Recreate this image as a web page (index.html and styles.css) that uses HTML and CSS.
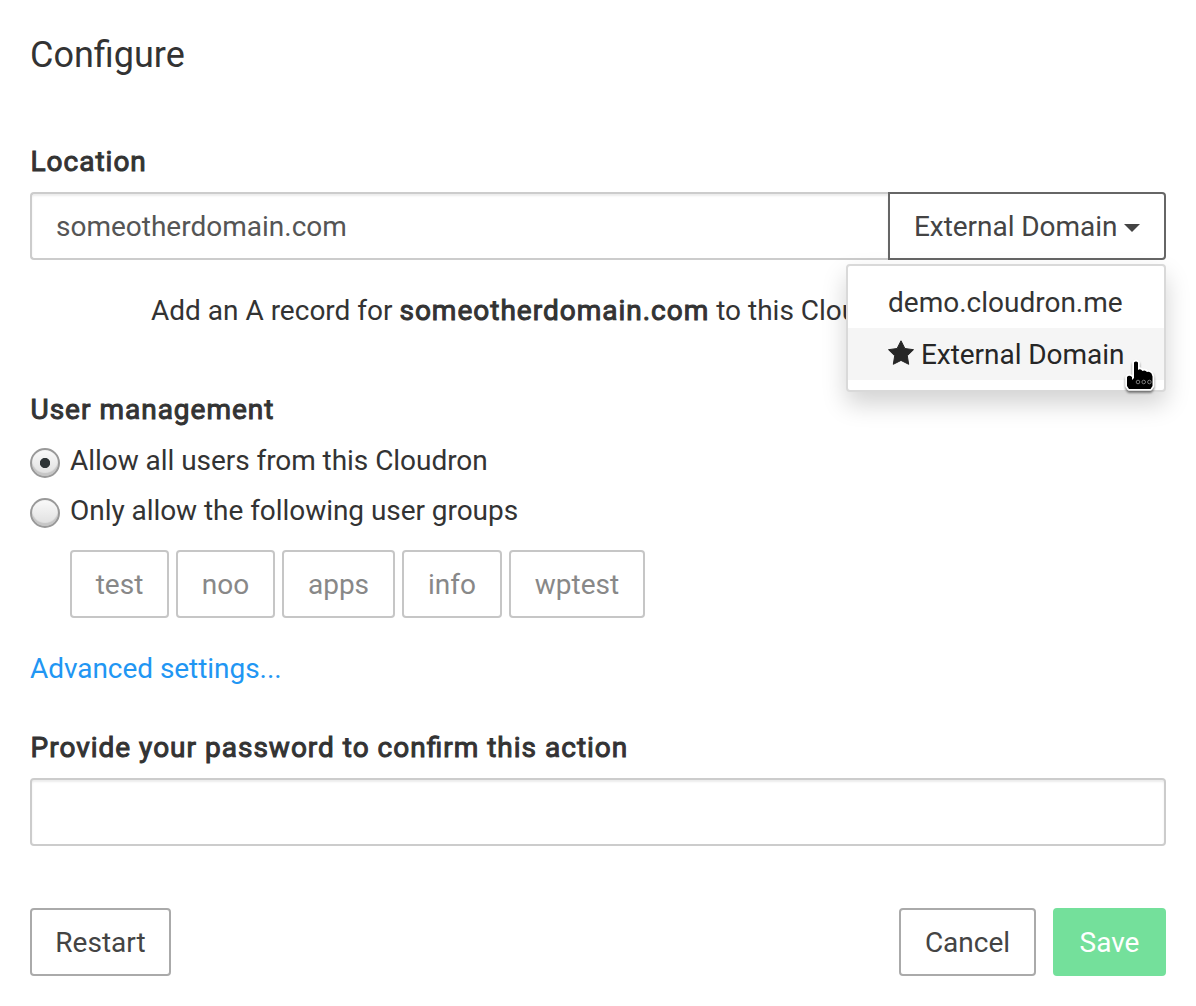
FILE: index.html
```
<!DOCTYPE html>
<html lang="en">
<head>
<meta charset="utf-8">
<title>Configure</title>
<link rel="stylesheet" href="styles.css">
</head>
<body>
<form class="dialog">
  <h1 class="title">Configure</h1>

  <section class="location">
    <div class="heading">Location</div>
    <div class="input-group">
      <div class="input domain-input">someotherdomain.com</div>
      <div class="domain-select">
        <button type="button" class="btn toggle">External Domain <span class="caret"></span></button>
        <div class="menu">
          <div class="menu-item">demo.cloudron.me</div>
          <div class="menu-item active"><svg class="star" viewBox="0 0 26 25" width="26" height="25"><path d="M13 .8L16.900 8.500 25.500 9.700 19.300 15.800 20.700 24.300 13 20.400 5.300 24.300 6.700 15.800 .5 9.700 9.100 8.500z"/></svg><span>External Domain</span></div>
          <svg class="pointer" viewBox="0 0 34 37" width="34" height="37"><path d="M10 4.500q2-2 4 0V12q2.500-2 4.500 1 2.500-1.500 4.500 1 2.500-1 4.500 1.500l1 3V28l-2 3H5L3 28V19q2-2.500 5 0v3l2-2z" fill="#000" stroke="#fff" stroke-width="3.600" stroke-linejoin="round"/><path d="M10 4.500q2-2 4 0V12q2.500-2 4.500 1 2.500-1.500 4.500 1 2.500-1 4.500 1.500l1 3V28l-2 3H5L3 28V19q2-2.500 5 0v3l2-2z" fill="#000"/><g fill="none" stroke="#888" stroke-width=".9"><circle cx="14" cy="24" r="1.800"/><circle cx="19.700" cy="24" r="1.800"/><circle cx="25.400" cy="24" r="1.800"/></g></svg>
        </div>
      </div>
    </div>
    <p class="hint">Add an A record for <b>someotherdomain.com</b> to this Cloudron</p>
  </section>

  <section class="users">
    <div class="heading">User management</div>
    <div class="choice"><span class="radio checked"></span><span>Allow all users from this Cloudron</span></div>
    <div class="choice"><span class="radio"></span><span>Only allow the following user groups</span></div>
    <div class="groups">
      <button type="button" class="btn group test">test</button>
      <button type="button" class="btn group noo">noo</button>
      <button type="button" class="btn group apps">apps</button>
      <button type="button" class="btn group info">info</button>
      <button type="button" class="btn group wptest">wptest</button>
    </div>
  </section>

  <a class="advanced">Advanced settings...</a>

  <section class="confirm">
    <div class="heading">Provide your password to confirm this action</div>
    <div class="input"></div>
  </section>

  <footer class="actions">
    <button type="button" class="btn restart">Restart</button>
    <button type="button" class="btn cancel">Cancel</button>
    <button type="button" class="btn save">Save</button>
  </footer>
</form>
</body>
</html>
```
FILE: styles.css
```
* { box-sizing: border-box; }
body {
  margin: 0;
  background: #fff;
  color: #333;
  font: 28px/42px Roboto, sans-serif;
}
.dialog {
  display: flex;
  flex-direction: column;
  height: 1006px;
  padding: 30px;
  overflow: hidden;
}
.title {
  margin: 0;
  height: 112px;
  font-size: 36px;
  font-weight: 400;
  line-height: 50px;
}
.heading, .hint b {
  font-weight: 400;
  font-feature-settings: "liga" 1;
  letter-spacing: 1px;
  -webkit-text-stroke: 1px #333;
}
.heading { height: 50px; padding-left: 0.5px; line-height: 40px; }
.input {
  height: 68px;
  padding: 12px 24px;
  border: 2px solid #ccc;
  border-radius: 4px;
  box-shadow: inset 0 2px 2px rgba(0, 0, 0, 0.075);
  color: #555;
}
.input-group { display: flex; }
.domain-input {
  flex: 1;
  border-right: 0;
  border-radius: 4px 0 0 4px;
}
.domain-select { position: relative; }
.btn {
  height: 68px;
  padding: 2px 0 0;
  border: 2px solid #aaa;
  border-radius: 4px;
  background: #fff;
  color: #444;
  font: inherit;
  white-space: nowrap;
}
.toggle {
  display: flex;
  align-items: center;
  width: 278px;
  padding-left: 24px;
  border-color: #666;
  border-radius: 0 4px 4px 0;
}
.toggle, .menu-item.active, .choice, .advanced { letter-spacing: -0.05px; }
.caret {
  margin: 2px 0 0 7px;
  border: 8px solid transparent;
  border-top-color: #444;
  border-bottom: 0;
}
.menu {
  position: absolute;
  top: 72px;
  right: 0;
  width: 320px;
  height: 128px;
  padding: 10px 0;
  border: 2px solid #d9d9d9;
  border-radius: 4px;
  background: #fff;
  box-shadow: 0 12px 24px rgba(0, 0, 0, 0.175);
}
.menu-item {
  display: flex;
  height: 52px;
  padding: 6px 40px;
  white-space: nowrap;
}
.menu-item.active { background: #f5f5f5; color: #262626; }
.star {
  flex: none;
  margin: 6px 7px 0 0;
  fill: #262626;
  stroke: #262626;
  stroke-width: 1;
  stroke-linejoin: round;
}
.pointer {
  position: absolute;
  top: 92px;
  left: 276px;
  filter: drop-shadow(0 2px 1px rgba(0, 0, 0, 0.5));
}
.hint { margin: 0; padding: 30px 0 0 121px; height: 130px; white-space: nowrap; }
.choice { display: flex; height: 50px; gap: 10px; }
.radio {
  width: 30px;
  height: 30px;
  margin-top: 8px;
  border: 2px solid #999;
  border-radius: 50%;
  background: linear-gradient(#fafafa, #dedede);
  box-shadow: inset 0 -3px 1px #c6c6c6, inset 0 0 0 1px #f4f4f4;
}
.radio.checked {
  background: radial-gradient(circle at 13px 13px, #2e3436 4.7px, transparent 5.5px), linear-gradient(#fafafa, #dedede);
}
.groups { display: flex; gap: 7px; padding: 10px 0 0 40px; }
.group { border-color: #c6c6c6; color: #888; }
.test { width: 99px; }
.noo { width: 99px; }
.apps { width: 113px; }
.info { width: 100px; }
.wptest { width: 136px; }
.users { height: 258px; }
.advanced { height: 80px; color: #2196f3; }
.confirm { height: 180px; }
.actions { display: flex; gap: 17px; }
.restart { width: 141px; margin-right: auto; }
.cancel { width: 137px; }
.save { width: 113px; border-color: #74e09b; background: #74e09b; color: #fff; }
```
